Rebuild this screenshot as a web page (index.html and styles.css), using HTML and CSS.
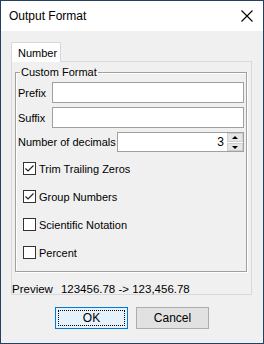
FILE: index.html
```html
<!DOCTYPE html>
<html lang="en">
<head>
  <meta charset="UTF-8">
  <title>Output Format</title>
  <link rel="stylesheet" href="styles.css">
</head>
<body>
  <div class="window">
    <div class="titlebar">
      <span class="title">Output Format</span>
      <svg class="close" width="12" height="12" viewBox="0 0 12 12">
        <path d="M0.5 0.5 L11.5 11.5 M11.5 0.5 L0.5 11.5" stroke="#000" stroke-width="1.1" fill="none"/>
      </svg>
    </div>

    <div class="content">
      <div class="tabs">
        <div class="tab">Number</div>
      </div>
      <div class="panel">
        <fieldset class="group">
          <legend>Custom Format</legend>
          <div class="row">
            <label>Prefix</label>
            <div class="field"></div>
          </div>
          <div class="row">
            <label>Suffix</label>
            <div class="field"></div>
          </div>
          <div class="row spin-row">
            <label>Number of decimals</label>
            <div class="spinner">
              <span class="value">3</span>
              <div class="arrows">
                <div class="arrow up"></div>
                <div class="arrow down"></div>
              </div>
            </div>
          </div>

          <div class="checks">
            <div class="check">
              <span class="box">
                <svg width="11" height="11" viewBox="0 0 11 11"><path d="M1.5 5.5 L4 8 L9.5 2.5" stroke="#222" stroke-width="1.2" fill="none"/></svg>
              </span>
              Trim Trailing Zeros
            </div>
            <div class="check">
              <span class="box">
                <svg width="11" height="11" viewBox="0 0 11 11"><path d="M1.5 5.5 L4 8 L9.5 2.5" stroke="#222" stroke-width="1.2" fill="none"/></svg>
              </span>
              Group Numbers
            </div>
            <div class="check"><span class="box"></span>Scientific Notation</div>
            <div class="check"><span class="box"></span>Percent</div>
          </div>
        </fieldset>
        <div class="preview">Preview<span class="sample">123456.78 -&gt; 123,456.78</span></div>
      </div>

      <div class="buttons">
        <button class="btn default"><span>OK</span></button>
        <button class="btn">Cancel</button>
      </div>
    </div>
  </div>
</body>
</html>
```

FILE: styles.css
```css
body {
  margin: 0;
  font-family: "Liberation Sans", Arial, sans-serif;
  font-size: 11px;
  color: #000;
}

.window {
  width: 264px;
  height: 344px;
  box-sizing: border-box;
  border: 1px solid #22405f;
  background-color: #f0f0f0;
  display: flex;
  flex-direction: column;
}

/* Title bar */
.titlebar {
  height: 30px;
  background-color: #fff;
  display: flex;
  align-items: center;
  justify-content: space-between;
  padding: 0 10px 0 8px;
}

.title {
  font-size: 12px;
}

/* Tabs */
.content {
  padding: 11px 10px 0 10px;
}

.tabs {
  display: flex;
  height: 20px;
  position: relative;
  z-index: 1;
}

.tab {
  width: 50px;
  height: 20px;
  box-sizing: border-box;
  border: 1px solid #d9d9d9;
  border-bottom: none;
  background-color: #fff;
  padding: 1px 0 0 6px;
  line-height: 19px;
}

.panel {
  width: 241px;
  height: 234px;
  box-sizing: border-box;
  border: 1px solid #d9d9d9;
  margin-top: -1px;
  padding-top: 4px;
}

/* Group box */
.group {
  margin: 0 4px 0 3px;
  height: 206px;
  box-sizing: border-box;
  border: 1px solid #a0a0a0;
  box-shadow: inset 1px 1px 0 #fff, 1px 1px 0 #fff;
  padding: 4px 2px 0 2px;
}

.group legend {
  padding: 0 1px;
  margin-left: 2px;
}

.row {
  display: flex;
  align-items: center;
  height: 21px;
  margin-bottom: 4px;
}

.row label {
  width: 34px;
  flex-shrink: 0;
}

.field {
  flex: 1;
  height: 21px;
  box-sizing: border-box;
  border: 1px solid #a0a0a0;
  background-color: #fff;
}

.spin-row {
  height: 20px;
  margin-top: 1px;
}

.spin-row label {
  width: 99px;
}

.spinner {
  flex: 1;
  height: 20px;
  box-sizing: border-box;
  border: 1px solid #a0a0a0;
  background-color: #fff;
  display: flex;
  justify-content: flex-end;
  align-items: center;
}

.spinner .value {
  font-size: 12px;
  padding-right: 3px;
}

.arrows {
  width: 16px;
  height: 18px;
  display: flex;
  flex-direction: column;
  gap: 1px;
  background-color: #fff;
}

.arrow {
  flex: 1;
  background-color: #e6e6e6;
  border: 1px solid #cfcfcf;
  position: relative;
}

.arrow::after {
  content: "";
  position: absolute;
  left: 4px;
  border-left: 3px solid transparent;
  border-right: 3px solid transparent;
}

.arrow.up::after {
  top: 2px;
  border-bottom: 3px solid #000;
}

.arrow.down::after {
  top: 2px;
  border-top: 3px solid #000;
}

/* Check boxes */
.checks {
  padding: 6px 0 0 5px;
}

.check {
  display: flex;
  align-items: center;
  height: 13px;
  margin-bottom: 15px;
}

.box {
  width: 13px;
  height: 13px;
  box-sizing: border-box;
  border: 1px solid #333;
  background-color: #fff;
  margin-right: 3px;
  display: flex;
  align-items: center;
  justify-content: center;
}

.preview {
  margin-top: 11px;
  font-size: 11.5px;
}

.sample {
  margin-left: 8px;
}

/* Buttons */
.buttons {
  display: flex;
  justify-content: center;
  gap: 8px;
  margin-top: 12px;
}

.btn {
  width: 73px;
  height: 22px;
  font-family: "Liberation Sans", Arial, sans-serif;
  font-size: 12px;
  color: #000;
  background-color: #e1e1e1;
  border: 1px solid #adadad;
  padding: 0;
}

.btn.default {
  background-color: #e5f1fb;
  border-color: #0078d7;
  padding: 2px;
}

.btn.default span {
  display: flex;
  align-items: center;
  justify-content: center;
  height: 100%;
  box-sizing: border-box;
  border: 1px dotted #000;
}
```
